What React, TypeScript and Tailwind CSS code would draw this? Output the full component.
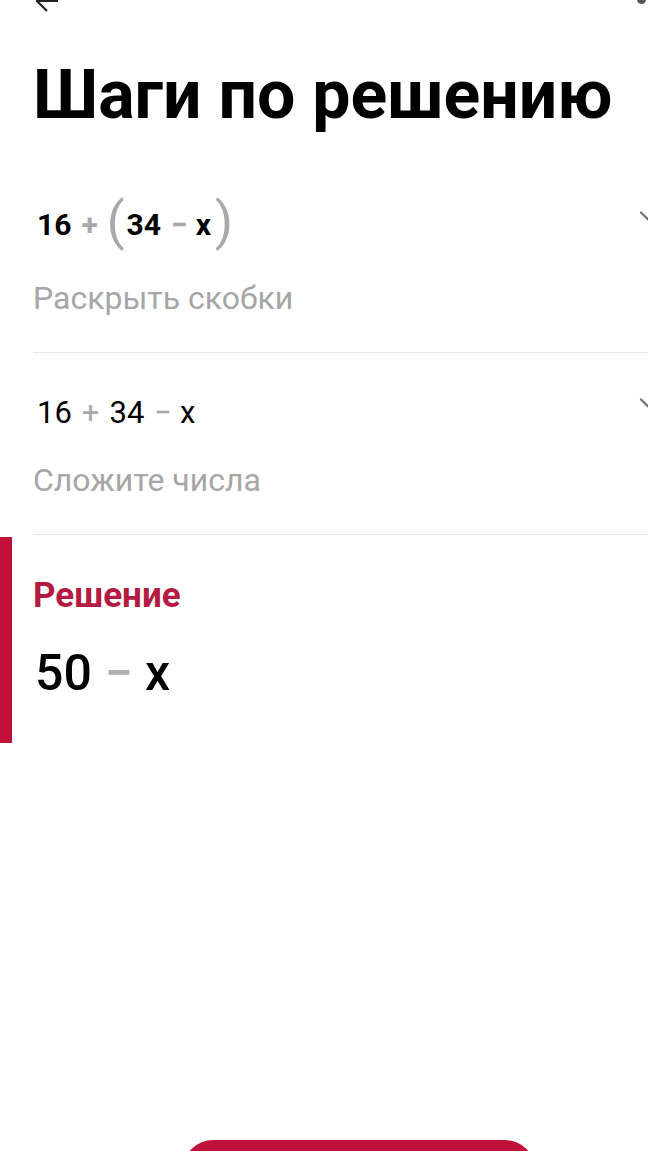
import { ChevronDown } from "lucide-react";

const App = () => {
  return (
    <div
      className="relative w-[648px] h-[1151px] overflow-hidden bg-white text-black"
      style={{ fontFamily: "Roboto, 'Noto Sans', sans-serif" }}
    >
      {/* Top bar (scrolled, mostly cut off) */}
      <div className="h-[20px] relative">
        <svg className="absolute left-[34px] top-[-12px]" width="26" height="26" viewBox="0 0 26 26">
          <path d="M24 13H3M13 3L3 13l10 10" stroke="#222" strokeWidth="2.2" fill="none" />
        </svg>
        <span className="absolute right-[2px] top-[-5px] w-[9px] h-[9px] rounded-full bg-[#555]" />
      </div>

      <h1 className="px-[33px] mt-[38px] text-[68px] leading-[74px] font-bold whitespace-nowrap">
        Шаги по решению
      </h1>

      {/* Steps */}
      <div className="pl-[33px] mt-[62px]">
        <div className="relative border-b border-[#e6e6e6] pb-[34px]">
          <div className="flex items-center text-[30px] font-bold h-[60px] pl-[4px]">
            <span>16</span>
            <span className="text-[#a8a8a8] ml-[10px] mr-[9px]">+</span>
            <span className="text-[#a8a8a8] text-[52px] font-normal leading-none mb-[4px]">(</span>
            <span className="ml-[2px]">34</span>
            <span className="text-[#a8a8a8] ml-[10px] mr-[8px]">−</span>
            <span>x</span>
            <span className="text-[#a8a8a8] text-[52px] font-normal leading-none ml-[4px] mb-[4px]">)</span>
          </div>
          <p className="mt-[24px] text-[32px] leading-[40px] text-[#a6a6a6]">Раскрыть скобки</p>
          <ChevronDown className="absolute right-[-14px] top-[8px] text-[#777]" size={28} strokeWidth={2} />
        </div>

        <div className="relative border-b border-[#e6e6e6] pt-[40px] pb-[34px]">
          <div className="flex items-center text-[31px] h-[40px] pl-[4px]">
            <span>16</span>
            <span className="text-[#a8a8a8] ml-[10px] mr-[10px]">+</span>
            <span>34</span>
            <span className="text-[#a8a8a8] ml-[10px] mr-[8px]">−</span>
            <span>x</span>
          </div>
          <p className="mt-[27px] text-[32px] leading-[40px] text-[#a6a6a6]">Сложите числа</p>
          <ChevronDown className="absolute right-[-14px] top-[36px] text-[#777]" size={28} strokeWidth={2} />
        </div>
      </div>

      {/* Solution */}
      <div className="flex mt-[2px]">
        <div className="w-[12px] h-[206px] bg-[#c0113a]" />
        <div className="pl-[21px] pt-[39px]">
          <p className="text-[35px] leading-[40px] font-bold text-[#b31b42]">Решение</p>
          <div className="mt-[27px] flex items-center text-[50px] leading-[60px] font-medium">
            <span className="ml-[2px]">50</span>
            <span className="text-[#b0b0b0] ml-[13px] mr-[12px]">−</span>
            <span>x</span>
          </div>
        </div>
      </div>

      {/* Bottom button (cut off) */}
      <div className="absolute left-[183px] top-[1140px] w-[352px] h-[60px] rounded-[30px] bg-[#c0113a]" />
    </div>
  );
};

export default App;
